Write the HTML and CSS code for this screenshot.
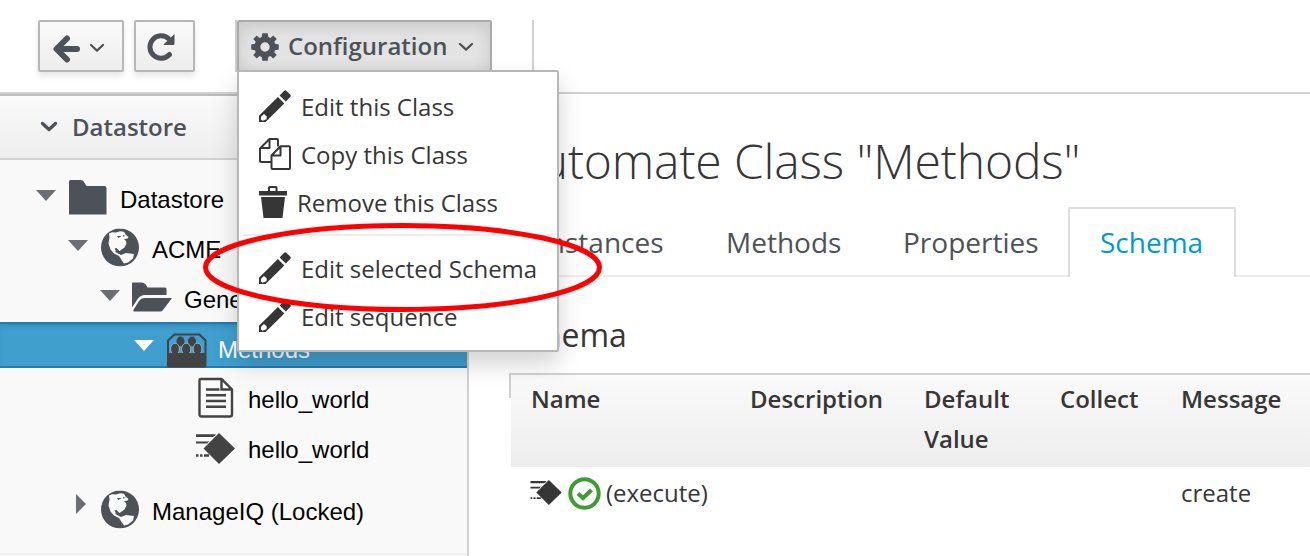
FILE: index.html
```html
<!DOCTYPE html>
<html lang="en">
<head>
<meta charset="utf-8">
<title>Automate Class "Methods"</title>
<link rel="stylesheet" href="styles.css">
</head>
<body>
<svg class="defs" aria-hidden="true">
  <defs>
    <symbol id="chevron" viewBox="0 0 16 10"><path d="M2 2l6 5.6L14 2" fill="none" stroke="currentColor" stroke-width="2.2" stroke-linecap="round" stroke-linejoin="round"/></symbol>
    <symbol id="pencil" viewBox="0 0 32 32">
      <path fill-rule="evenodd" d="M0 25.8 18.9 7 25.3 13.5 6.6 32H0zM2.200 26.500 1.800 29.2 3.500 30.800 7.500 29.200 7.800 26.500 5 24z"/>
      <path d="M20.6 5.4 25 .9q1.300-1.300 2.600 0l3.600 3.600q1.200 1.300 0 2.600L26.800 11.600z"/>
    </symbol>
    <symbol id="copy" viewBox="0 0 32 32">
      <g fill="none" stroke="currentColor" stroke-width="2" stroke-linejoin="round"><path d="M12 24H2Q1 24 1 23V10.500L10.500 1H18Q19 1 19 2V8.500M10.500 1V10H1"/><path d="M12.500 17.500 21.500 8.300H30Q31 8.300 31 9.300V30Q31 31 30 31H13.500Q12.500 31 12.500 30zM21.500 8.300V17.500H12.500"/></g>
    </symbol>
    <symbol id="trash" viewBox="0 0 28 32"><path d="M0 5H9V1.500Q9 0 10.500 0H17Q18.500 0 18.500 1.500V5H28V9.500H0zM11 2V5H16.500V2zM2 11H26L23.500 32H4.500z" fill-rule="evenodd"/></symbol>
    <symbol id="globe" viewBox="0 0 38 38">
      <circle cx="19" cy="19" r="19"/>
      <path fill="#f9f9f9" d="M8 5 11 3.800 15 4 19 2.800 23 3.200 24.500 6 27.500 8.500 26.500 10 23 10.800 25 12.500 25.500 15 23.500 19 18.500 22.500 15.500 19.500 13.500 20 14.500 21.500 14.500 23.500 17 25 20 26.500 25 24.500 33 25.500 32 30 27 34 23 35 20.500 31.500 18 27.500 13 25 9.500 21 7.500 15 8.500 9z"/>
      <path d="M16 7.500l4.500 0-3 2zM22 6.500l2.500 1-2.500.5z"/>
    </symbol>
    <symbol id="method" viewBox="0 0 39 31">
      <path d="M0 2.300H19L17 4H0zM0 1.300H20L18.500 3.300H0zM0 8.500H13.200L11.200 10.500H0z"/><path d="M0 22.500H13" stroke="currentColor" stroke-width="2.400" stroke-dasharray="2.500 1.500 2.500 1.500 10"/>
      <path d="M23 0 39 15.500 23 31 7.500 15.500z"/>
    </symbol>
    <symbol id="caret" viewBox="0 0 20 12"><path d="M0 0H20L10 11z"/></symbol>
  </defs>
</svg>
<div class="page">
  <header class="toolbar">
    <button class="btn back"><svg width="27" height="28" viewBox="0 0 27 28"><path d="M24 14H5M14 3.500 3.500 14 14 24.500" fill="none" stroke="currentColor" stroke-width="6" stroke-linecap="round" stroke-linejoin="round"/></svg><svg class="chev" width="16" height="10"><use href="#chevron"/></svg></button>
    <button class="btn reload"><svg width="28" height="28" viewBox="0 0 28 28"><path d="M22.500 21.500A11.200 11.200 0 1 1 21.500 5.600" fill="none" stroke="currentColor" stroke-width="5" stroke-linecap="round"/><path d="M16.500 11.500 27.500 1V10.500Q27.500 12 26 12H17z"/></svg></button>
    <div class="group">
      <button class="btn config"><svg width="28" height="28" viewBox="-14 -14 28 28"><path fill-rule="evenodd" d="M-2.700-13.800H2.700L3.300-10 5.500-9.100 8.200-11.600 11.800-8 9.300-5.200 10.100-3.200 13.800-2.600V2.600L10.100 3.200 9.300 5.200 11.800 8 8.200 11.600 5.500 9.100 3.300 10 2.700 13.800H-2.700L-3.300 10-5.500 9.100-8.200 11.600-11.800 8-9.300 5.200-10.100 3.200-13.800 2.600V-2.600L-10.100-3.200-9.300-5.200-11.800-8-8.200-11.600-5.500-9.100-3.300-10zM0-4.700A4.700 4.700 0 1 0 0 4.700 4.700 4.700 0 1 0 0-4.700z"/></svg><span class="config-label">Configuration</span><svg class="chev" width="16" height="10"><use href="#chevron"/></svg></button>
      <ul class="menu">
        <li><svg width="32" height="32"><use href="#pencil"/></svg><span>Edit this Class</span></li>
        <li><svg width="32" height="32"><use href="#copy"/></svg><span>Copy this Class</span></li>
        <li><svg width="28" height="32"><use href="#trash"/></svg><span>Remove this Class</span></li>
        <li class="divider"></li>
        <li><svg width="32" height="32"><use href="#pencil"/></svg><span>Edit selected Schema</span></li>
        <li><svg width="32" height="32"><use href="#pencil"/></svg><span>Edit sequence</span></li>
      </ul>
      <svg class="highlight" width="400" height="90" viewBox="0 0 400 90"><ellipse cx="199.500" cy="45.500" rx="197" ry="42" fill="none" stroke="#f00" stroke-width="5"/></svg>
    </div>
  </header>
  <div class="body">
    <aside class="sidebar">
      <div class="side-head"><svg width="18" height="12" viewBox="0 0 18 12"><path d="M2.500 2.500 9 8.500 15.500 2.500" fill="none" stroke="currentColor" stroke-width="3.400" stroke-linecap="round" stroke-linejoin="round"/></svg><span>Datastore</span></div>
      <div class="tree">
        <div class="row l0"><svg class="arrow" width="20" height="12"><use href="#caret"/></svg><svg class="ico" viewBox="0 0 40 50"><path d="M0 9.500Q0 8 1.500 8H11Q14 8 15 10L17.500 14H35.500Q37.500 14 37.500 16V42.500H0z"/></svg><span>Datastore</span></div>
        <div class="row l1"><svg class="arrow" width="20" height="12"><use href="#caret"/></svg><svg class="ico" viewBox="0 0 40 50"><use href="#globe" y="6.500" width="38" height="38"/></svg><span>ACME</span></div>
        <div class="row l2"><svg class="arrow" width="20" height="12"><use href="#caret"/></svg><svg class="ico" viewBox="1 0 40 50"><path d="M0 11.500Q0 10.500 1 10.500H9Q13 10.500 14 13L15.500 15.500H33Q34.500 15.500 34.500 17V23H13Q8 23 5 28L0 35.500zM2 37 7 29Q9 26 13 26H40L31 38Q30 39.500 28 39.500H2Q.5 39 2 37z"/></svg><span>General</span></div>
        <div class="row l3"><svg class="arrow" width="20" height="12"><use href="#caret"/></svg><svg class="ico" viewBox="0 0 40 50"><path d="M1 44V18.500L7.500 12.500H32.500L38.500 18.500V44" fill="none" stroke="currentColor" stroke-width="2"/><path d="M0 31H39V45.500H0z"/><ellipse cx="13.500" cy="19.500" rx="4" ry="5"/><ellipse cx="25" cy="19.500" rx="4" ry="5"/><g stroke="#a5cfe6" stroke-width=".7"><ellipse cx="8" cy="27" rx="4.400" ry="5.800"/><ellipse cx="19.200" cy="27" rx="4.600" ry="5.800"/><ellipse cx="30.500" cy="27" rx="4.400" ry="5.800"/></g><path d="M1 31H38V44H1z"/></svg><span>Methods</span></div>
        <div class="row l4"><span class="arrow"></span><svg class="ico" viewBox="0 0 40 50"><path d="M3 7H23.500L34 17.500V42.500Q34 44.500 32 44.500H3.500Q1.500 44.500 1.500 42.500V8.500Q1.500 7 3 7zM23.500 7V17.500H34M8 17.500H21.500M8 23.200H28M8 29H28M8 34.700H28" fill="none" stroke="currentColor" stroke-width="2.400"/></svg><span>hello_world</span></div>
        <div class="row l4"><span class="arrow"></span><svg class="ico" viewBox="2 0 40 50"><use href="#method" y="11" width="39" height="31"/></svg><span>hello_world</span></div>
        <div class="row l1 last"><svg class="arrow right" width="20" height="20" viewBox="0 0 20 20"><path d="M8 0V20L18 10z"/></svg><svg class="ico" viewBox="0 0 40 50"><use href="#globe" y="6.500" width="38" height="38"/></svg><span>ManageIQ (Locked)</span></div>
      </div>
    </aside>
    <main class="content">
      <h1><span>Automate Class "Methods"</span></h1>
      <nav class="tabs"><a class="t1"><span>Instances</span></a><a class="t2"><span>Methods</span></a><a class="t3"><span>Properties</span></a><a class="active"><span>Schema</span></a></nav>
      <h3><span>Schema</span></h3>
      <div class="table-wrap">
        <table>
          <colgroup><col class="c1"><col class="c2"><col class="c3"><col class="c4"><col class="c5"></colgroup>
          <thead><tr><th><span>Name</span></th><th><span>Description</span></th><th><span>Default<br>Value</span></th><th><span>Collect</span></th><th><span>Message</span></th></tr></thead>
          <tbody><tr><td><div class="cell"><svg width="32" height="25" viewBox="0 0 39 31"><use href="#method" width="39" height="31"/></svg><svg class="ok" width="33" height="33" viewBox="0 0 33 33"><circle cx="16.500" cy="16.500" r="14.200" fill="none" stroke="currentColor" stroke-width="4"/><path d="M10 16.500 15 21 23.500 13" fill="none" stroke="currentColor" stroke-width="4.200"/></svg><span>(execute)</span></div></td><td></td><td></td><td></td><td><span>create</span></td></tr></tbody>
        </table>
      </div>
    </main>
  </div>
</div>
</body>
</html>
```
FILE: styles.css
```css
* { box-sizing: border-box; }
body { margin: 0; font-family: "Open Sans", sans-serif; font-size: 24px; color: #363636; background: #fff; }
svg { display: block; flex: none; fill: currentColor; }
.defs { position: absolute; width: 0; height: 0; }
.page { width: 1310px; height: 556px; overflow: hidden; display: flex; flex-direction: column; }
.toolbar { height: 94px; flex: none; padding: 20px 0 0 38px; display: flex; align-items: flex-start; border-bottom: 2px solid #d1d1d1; }
.btn { height: 52px; border: 2px solid #b7b7b7; border-radius: 2px; background: linear-gradient(#fafafa, #ededed); box-shadow: 0 4px 6px rgba(3, 3, 3, .1); color: #4d5258; display: flex; align-items: center; padding: 0; font: 600 24px "Open Sans", sans-serif; }
.back { width: 86px; padding: 5px 0 0 13px; margin-right: 10px; }
.back .chev { margin: -2px 0 0 9px; }
.reload { width: 61px; padding: 2px 0 0 11px; margin-right: 40px; }
.group { width: 299px; height: 52px; position: relative; border-left: 2px solid #ccc; border-right: 2px solid #d1d1d1; }
.config { width: 255px; padding: 2px 0 0 12px; background: #e3e3e3; border-color: #aaa; box-shadow: inset 0 4px 16px rgba(0, 0, 0, .13); }
.config-label { margin: -4px 11px 0 9px; width: 159px; white-space: nowrap; }
.menu { position: absolute; z-index: 2; left: 0; top: 50px; width: 322px; height: 282px; margin: 0; padding: 11px 4px; list-style: none; background: #fff; border: 2px solid #b7b7b7; border-radius: 2px; box-shadow: 0 12px 24px rgba(0, 0, 0, .175); }
.menu li { height: 48px; padding-left: 16px; display: flex; align-items: center; gap: 10px; white-space: nowrap; }
.menu svg { margin-top: -2px; }
.menu span { margin-top: -2px; }
.menu .divider { height: 2px; margin: 7px 0 9px; background: #ededed; padding: 0; }
.highlight { position: absolute; z-index: 3; left: -34px; top: 202px; }
.body { flex: 1; min-height: 0; display: flex; }
.sidebar { width: 469px; border-right: 2px solid #d1d1d1; border-top: 2px solid #bbb; background: #f9f9f9; }
.side-head { height: 64px; padding-left: 40px; display: flex; align-items: center; gap: 14px; background: linear-gradient(#fafafa, #ededed); border-bottom: 2px solid #d1d1d1; font-weight: 600; color: #4d5258; }
.side-head span { margin-top: -2px; }
.tree { height: 395px; padding-top: 12px; border-bottom: 2px solid #efefef; font-family: "Liberation Sans", Arial, sans-serif; color: #000; }
.row { height: 50px; display: flex; white-space: nowrap; }
.row > span:last-child { line-height: 50px; padding-top: 3px; height: 50px; }
.arrow { width: 20px; margin: 18px 13px 0 0; color: #6b6f73; }
.arrow.right { margin-top: 10px; }
.ico { width: 40px; height: 50px; margin-right: 11px; color: #4d5258; overflow: visible; }
.l0 { padding-left: 36px; }
.l1 { padding-left: 68px; }
.l2 { padding-left: 100px; }
.l3 { padding-left: 134px; height: 46px; margin-bottom: 4px; color: #fff; background: #409fcf; box-shadow: inset 0 2px #267bb0, inset 0 -2px #267bb0, inset 0 6px 6px -4px #267bb0; }
.l3 .arrow { color: #fff; }
.l3 .ico, .l4 .ico { color: #434343; }
.l4 { padding-left: 165px; }
.l4 .ico { margin-right: 10px; }
.last { margin-top: 12px; }
.content { flex: 1; min-width: 0; padding-left: 40px; }
h1, h3 { margin: 0; font-weight: 300; white-space: nowrap; }
h1 { font-size: 48px; line-height: 66px; padding: 34px 0 0 2px; height: 113px; letter-spacing: -.13px; }
.tabs { height: 70px; display: flex; font-size: 28px; color: #4d5258; border-bottom: 2px solid #ededed; }
.tabs a { padding: 0 29px; height: 70px; line-height: 66px; border: 2px solid transparent; border-bottom: 0; white-space: nowrap; }
.t1 { width: 186px; }
.t2 { width: 177px; }
.t3 { width: 196px; }
.tabs .active { width: 168px; padding-left: 30px; color: #0099d3; background: #fff; border-color: #ddd; border-radius: 2px 2px 0 0; }
h3 { font-size: 32px; font-weight: 400; line-height: 44px; padding: 36px 0 0; height: 96px; }
.table-wrap { border-top: 2px solid #d1d1d1; background: linear-gradient(#d1d1d1, #d1d1d1) 0 0 / 2px 23px no-repeat; padding-left: 2px; }
table { width: 799px; table-layout: fixed; border-collapse: collapse; line-height: 40px; }
.c1 { width: 219px; } .c2 { width: 174px; } .c3 { width: 136px; } .c4 { width: 121px; } .c5 { width: 149px; }
thead { background: linear-gradient(#fafafa, #ededed); }
th { height: 92px; padding: 4px 0 8px 20px; text-align: left; vertical-align: top; font-weight: 600; white-space: nowrap; }
td { padding: 6px 0 0 20px; }
.cell { display: flex; align-items: center; margin-left: -1px; white-space: nowrap; }
.cell svg:first-child { margin-top: -2px; }
.ok { color: #3f9c35; margin: 0 5px 0 6px; }
```
